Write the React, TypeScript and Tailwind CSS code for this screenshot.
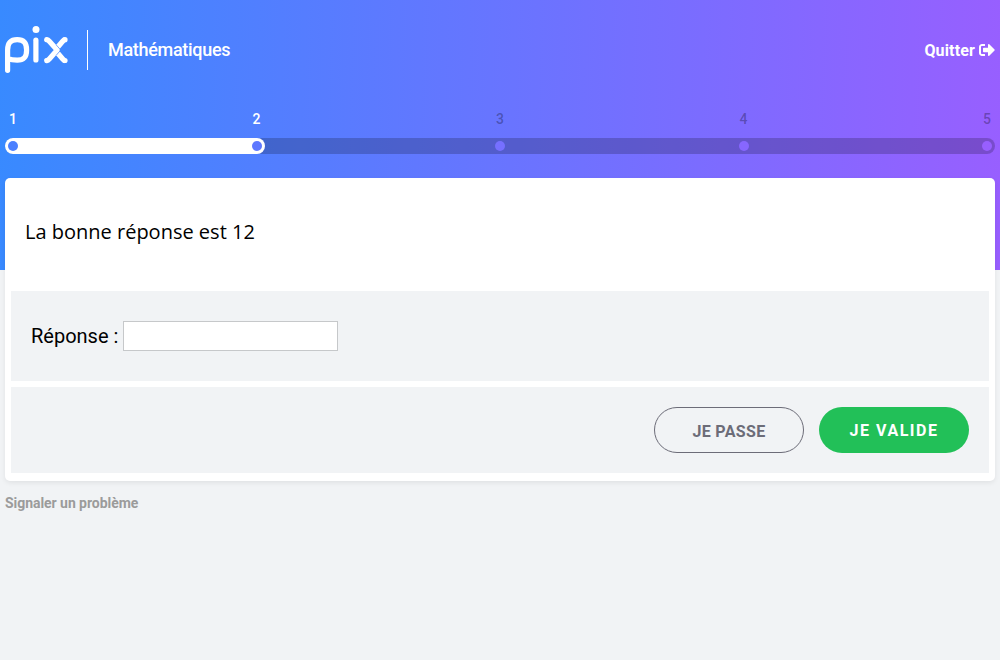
import { FaSignOutAlt } from 'react-icons/fa';

const STEPS = [1, 2, 3, 4, 5];
const CURRENT_STEP = 2;

function PixLogo() {
  return (
    <svg className="block h-[50px] w-[64px] shrink-0" viewBox="0 0 64 50" fill="none" stroke="#fff" strokeWidth="5.2" role="img" aria-label="Pix">
      <path strokeLinecap="round" d="M2.6 45.3V24.9C2.6 18 5.5 14.7 12.2 14.7C19 14.7 21.6 18 21.6 24.9C21.6 32 19 35.1 12.2 35.1C8.5 35.1 5.5 34.6 3.2 33.6" />
      <path strokeLinecap="round" d="M30.9 15.2V35" />
      <circle cx="31" cy="4.6" r="3.5" fill="#fff" stroke="none" />
      <path strokeLinecap="round" strokeLinejoin="round" strokeWidth="5.2" d="M41.7 14.6C42.9 14.8 43.5 15.3 44.3 16.2L52.2 25.1L44.3 34C43.5 34.9 42.9 35.4 41.7 35.6" />
      <path strokeWidth="5.2" d="M60 14.6C59 14.8 58.4 15.4 57.7 16.2L52.6 22.2" />
      <path strokeWidth="5.2" d="M60 35.6C59 35.4 58.4 34.8 57.7 34L52.6 28" />
      <circle cx="60" cy="14.7" r="2.6" fill="#fff" stroke="none" />
      <circle cx="60" cy="35.5" r="2.6" fill="#fff" stroke="none" />
      <path strokeWidth="0.7" stroke="#4284ff" d="M51.2 19.9L55.2 24.4M51.2 30.3L55.2 25.8" />
    </svg>
  );
}

function ProgressBar() {
  return (
    <div className="px-[5px]">
      <div className="flex h-[16px] justify-between text-[14px] leading-[16px]">
        {STEPS.map((step) => (
          <span key={step} className={`w-[16px] text-center font-medium ${step <= CURRENT_STEP ? 'text-white' : 'text-black/30'}`}>
            {step}
          </span>
        ))}
      </div>
      <div className="relative mt-[11px] h-[16px] rounded-full bg-black/20">
        <div className="absolute inset-y-0 left-0 w-[260px] rounded-full bg-white" />
        <div className="relative flex h-full items-center justify-between px-[3px]">
          <span className="size-[10px] rounded-full bg-[#4b80ff]" />
          <span className="size-[10px] rounded-full bg-[#5e78ff]" />
          <span className="size-[10px] rounded-full bg-[#7670ff]" />
          <span className="size-[10px] rounded-full bg-[#8767ff]" />
          <span className="size-[10px] rounded-full bg-[#985fff]" />
        </div>
      </div>
    </div>
  );
}

export default function App() {
  return (
    <div className="h-[660px] overflow-hidden bg-[#f1f3f5] font-[Roboto,sans-serif] text-black">
      <div className="h-[270px] bg-[linear-gradient(91.6deg,#388aff,#985fff)]">
        <header className="flex h-[100px] items-center px-[5px]">
          <PixLogo />
          <div className="ml-[18px] h-[40px] w-px bg-white" />
          <h1 className="ml-[20px] pb-[2px] text-[18px] font-medium tracking-[-0.3px] text-white">Mathématiques</h1>
          <button className="ml-auto flex items-center gap-[4px] text-[16px] font-bold text-white">
            <span className="pt-[2px] tracking-[0.15px]">Quitter</span>
            <FaSignOutAlt size={16} />
          </button>
        </header>
        <div className="pt-[11px]">
          <ProgressBar />
        </div>
        <main className="px-[5px] pt-[24px]">
          <section className="h-[303px] rounded-[5px] bg-white px-[6px] shadow-[0_2px_5px_0_rgba(0,0,0,0.07)]">
            <div className="h-[113px] px-[14px] pt-[39px] font-['Open_Sans',sans-serif] text-[20px] leading-[30px]">
              La bonne réponse est 12
            </div>
            <div className="flex h-[90px] items-center bg-[#f1f3f5] px-[20px]">
              <label htmlFor="answer" className="mr-[5px] text-[20px]">Réponse :</label>
              <input id="answer" className="h-[30px] w-[215px] border border-[#c6c8ca] bg-white px-2 outline-none" />
            </div>
            <div className="mt-[6px] flex h-[86px] items-center justify-end gap-[15px] bg-[#f1f3f5] px-[20px]">
              <button className="h-[46px] w-[150px] rounded-full border border-[#6c6c78] pt-[3px] text-[16px] font-bold tracking-[0.35px] text-[#6c6c78]">
                JE PASSE
              </button>
              <button className="h-[46px] w-[150px] rounded-full bg-[#22c058] pt-[2px] text-[16px] font-bold tracking-[1.5px] text-white">
                JE VALIDE
              </button>
            </div>
          </section>
          <button className="mt-[12px] block text-[14px] leading-[20px] font-bold tracking-[-0.05px] text-[#9b9b9b]">Signaler un problème</button>
        </main>
      </div>
    </div>
  );
}
